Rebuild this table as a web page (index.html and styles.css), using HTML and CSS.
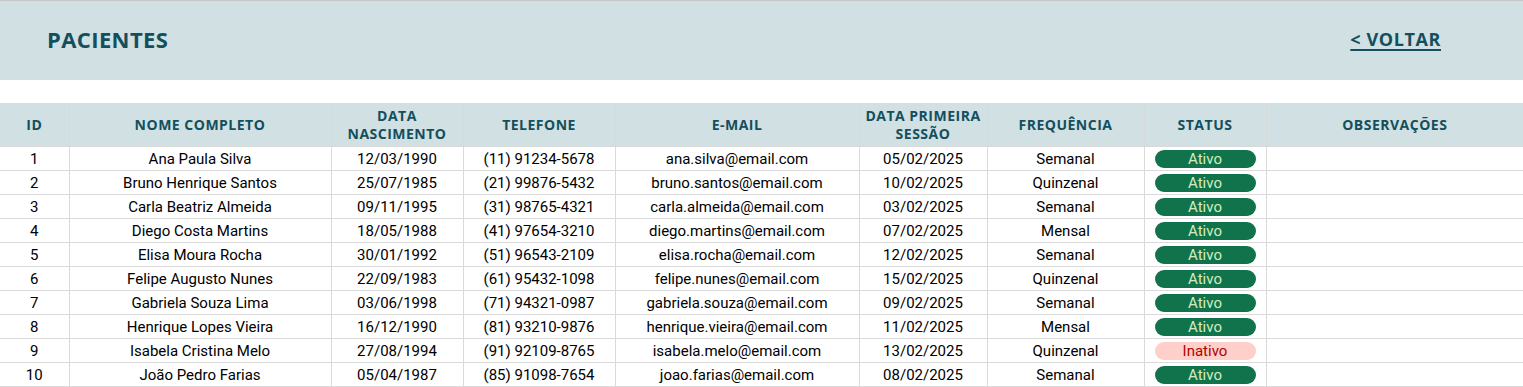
FILE: index.html
```html
<!DOCTYPE html>
<html lang="pt-BR">
<head>
<meta charset="utf-8">
<title>Pacientes</title>
<link rel="stylesheet" href="styles.css">
</head>
<body>
<header class="topbar">
  <h1 class="title">PACIENTES</h1>
  <a class="back" href="#">&lt; VOLTAR</a>
</header>
<table class="grid">
  <colgroup>
    <col class="c-id"><col class="c-nome"><col class="c-nasc"><col class="c-tel"><col class="c-mail"><col class="c-sess"><col class="c-freq"><col class="c-status"><col class="c-obs">
  </colgroup>
  <thead>
    <tr>
      <th>ID</th><th>NOME COMPLETO</th><th>DATA<br>NASCIMENTO</th><th>TELEFONE</th><th>E-MAIL</th><th>DATA PRIMEIRA<br>SESSÃO</th><th>FREQUÊNCIA</th><th>STATUS</th><th>OBSERVAÇÕES</th>
    </tr>
  </thead>
  <tbody>
    <tr><td>1</td><td>Ana Paula Silva</td><td>12/03/1990</td><td>(11) 91234-5678</td><td>ana.silva@email.com</td><td>05/02/2025</td><td>Semanal</td><td><span class="badge on">Ativo</span></td><td></td></tr>
    <tr><td>2</td><td>Bruno Henrique Santos</td><td>25/07/1985</td><td>(21) 99876-5432</td><td>bruno.santos@email.com</td><td>10/02/2025</td><td>Quinzenal</td><td><span class="badge on">Ativo</span></td><td></td></tr>
    <tr><td>3</td><td>Carla Beatriz Almeida</td><td>09/11/1995</td><td>(31) 98765-4321</td><td>carla.almeida@email.com</td><td>03/02/2025</td><td>Semanal</td><td><span class="badge on">Ativo</span></td><td></td></tr>
    <tr><td>4</td><td>Diego Costa Martins</td><td>18/05/1988</td><td>(41) 97654-3210</td><td>diego.martins@email.com</td><td>07/02/2025</td><td>Mensal</td><td><span class="badge on">Ativo</span></td><td></td></tr>
    <tr><td>5</td><td>Elisa Moura Rocha</td><td>30/01/1992</td><td>(51) 96543-2109</td><td>elisa.rocha@email.com</td><td>12/02/2025</td><td>Semanal</td><td><span class="badge on">Ativo</span></td><td></td></tr>
    <tr><td>6</td><td>Felipe Augusto Nunes</td><td>22/09/1983</td><td>(61) 95432-1098</td><td>felipe.nunes@email.com</td><td>15/02/2025</td><td>Quinzenal</td><td><span class="badge on">Ativo</span></td><td></td></tr>
    <tr><td>7</td><td>Gabriela Souza Lima</td><td>03/06/1998</td><td>(71) 94321-0987</td><td>gabriela.souza@email.com</td><td>09/02/2025</td><td>Semanal</td><td><span class="badge on">Ativo</span></td><td></td></tr>
    <tr><td>8</td><td>Henrique Lopes Vieira</td><td>16/12/1990</td><td>(81) 93210-9876</td><td>henrique.vieira@email.com</td><td>11/02/2025</td><td>Mensal</td><td><span class="badge on">Ativo</span></td><td></td></tr>
    <tr><td>9</td><td>Isabela Cristina Melo</td><td>27/08/1994</td><td>(91) 92109-8765</td><td>isabela.melo@email.com</td><td>13/02/2025</td><td>Quinzenal</td><td><span class="badge off">Inativo</span></td><td></td></tr>
    <tr><td>10</td><td>João Pedro Farias</td><td>05/04/1987</td><td>(85) 91098-7654</td><td>joao.farias@email.com</td><td>08/02/2025</td><td>Semanal</td><td><span class="badge on">Ativo</span></td><td></td></tr>
  </tbody>
</table>
</body>
</html>
```
FILE: styles.css
```css
html, body {
  margin: 0;
  padding: 0;
  background: #ffffff;
}
body {
  font-family: Roboto, "Liberation Sans", sans-serif;
  color: #000;
}
.topbar {
  display: flex;
  align-items: center;
  justify-content: space-between;
  height: 76px;
  border-top: 1px solid #c7c7c7;
  background: #d0e0e3;
  padding: 0 82px 3px 47px;
  margin-bottom: 23px;
}
.title {
  margin: 0;
  font-family: "Open Sans", "Noto Sans", sans-serif;
  font-weight: 700;
  font-size: 22px;
  color: #134f5c;
  letter-spacing: 0.4px;
}
.back {
  font-family: "Open Sans", "Noto Sans", sans-serif;
  font-weight: 700;
  font-size: 18px;
  color: #134f5c;
  letter-spacing: 0.6px;
  text-decoration: underline;
  text-underline-offset: 3px;
  text-decoration-thickness: 2px;
}
.grid {
  border-collapse: collapse;
  table-layout: fixed;
  width: 1523px;
}
.c-id { width: 69px; }
.c-nome { width: 262px; }
.c-nasc { width: 132px; }
.c-tel { width: 152px; }
.c-mail { width: 244px; }
.c-sess { width: 128px; }
.c-freq { width: 157px; }
.c-status { width: 122px; }
.c-obs { width: 257px; }
.grid th {
  background: #d0e0e3;
  color: #134f5c;
  font-family: "Open Sans", "Noto Sans", sans-serif;
  font-weight: 700;
  font-size: 14px;
  letter-spacing: 0.5px;
  line-height: 18px;
  height: 43px;
  padding: 0;
  border: 1px solid #d9d9d9;
  border-top: none;
  text-align: center;
  vertical-align: middle;
}
.grid td {
  font-size: 15px;
  height: 22px;
  padding: 1px 0 0;
  border: 1px solid #dadada;
  text-align: center;
  vertical-align: middle;
  white-space: nowrap;
}
.grid tr > :first-child { border-left: none; }
.grid tr > :last-child { border-right: none; }
.badge {
  display: block;
  width: 101px;
  height: 18px;
  line-height: 18px;
  margin: 0 auto 0 10px;
  border-radius: 9px;
  font-size: 15px;
}
.badge.on {
  background: #11734b;
  color: #d4edbc;
}
.badge.off {
  background: #ffcfc9;
  color: #b10202;
}
```
